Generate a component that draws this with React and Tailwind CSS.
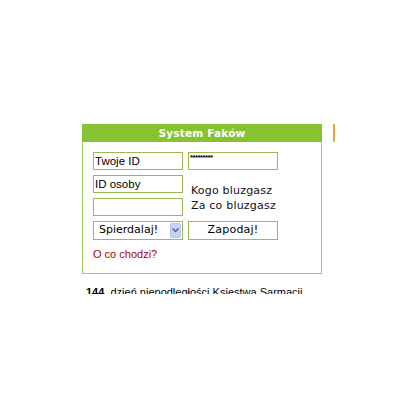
export default function App() {
  return (
    <div className="w-[400px] h-[400px] bg-white overflow-hidden pt-[124px] pl-[82px]">
      <div className="flex items-start">
        <div className="w-[240px]">
          <div
            className="h-[18px] bg-[#86c232] text-white font-bold text-[10.5px] leading-[18px] text-center tracking-[0.2px]"
            style={{ fontFamily: '"DejaVu Sans", Verdana, sans-serif' }}
          >
            System Faków
          </div>
          <div className="h-[132px] border border-t-0 border-[#9fcc5c] pt-[10px] pl-[10px]">
            <div className="grid grid-cols-[90px_90px] gap-x-[5px] grid-rows-[18px_18px_18px_19px] gap-y-[5px]">
              <div
                className="border border-[#99bb55] text-[11.5px] leading-[16px] pl-[1px] text-black"
                style={{ fontFamily: '"Liberation Sans", Arial, sans-serif' }}
              >
                Twoje ID
              </div>
              <div className="border border-[#99bb55] pl-[1px] text-[8px] leading-[10px] text-black font-bold tracking-[-0.6px]" style={{ fontFamily: '"Liberation Sans", Arial, sans-serif' }}>
                *********
              </div>
              <div
                className="border border-[#99bb55] text-[11.5px] leading-[16px] pl-[1px] text-black"
                style={{ fontFamily: '"Liberation Sans", Arial, sans-serif' }}
              >
                ID osoby
              </div>
              <div
                className="row-span-2 flex flex-col justify-center pl-[3px] pt-[4px] text-[11px] leading-[15px] text-[#111] tracking-[0.2px]"
                style={{ fontFamily: '"DejaVu Sans", Verdana, sans-serif' }}
              >
                <div>Kogo bluzgasz</div>
                <div>Za co bluzgasz</div>
              </div>
              <div className="border border-[#99bb55]"></div>
              <div
                className="border border-[#99bb55] flex items-center justify-between pl-[5px] pr-[1px] text-[11px] text-black"
                style={{ fontFamily: '"DejaVu Sans", Verdana, sans-serif' }}
              >
                <span>Spierdalaj!</span>
                <span className="w-[11px] h-[15px] rounded-[2px] bg-[#c3d3fd] border border-[#b2c4ef] flex items-center justify-center">
                  <svg width="7" height="5" viewBox="0 0 7 5">
                    <path d="M0.5 0.5 L3.5 3.5 L6.5 0.5" fill="none" stroke="#4d6185" strokeWidth="1.5" />
                  </svg>
                </span>
              </div>
              <div
                className="border border-[#99bb55] flex items-center justify-center text-[11px] text-black tracking-[0.2px]"
                style={{ fontFamily: '"DejaVu Sans", Verdana, sans-serif' }}
              >
                Zapodaj!
              </div>
            </div>
            <div
              className="mt-[8px] text-[11px] leading-[13px] text-[#aa0000]"
              style={{ fontFamily: '"Liberation Sans", Arial, sans-serif' }}
            >
              O co chodzi?
            </div>
          </div>
        </div>
        <div className="ml-[11px] w-[2px] h-[18px] flex flex-col">
          <div className="h-[15px] bg-[#f0a030]"></div>
          <div className="h-[3px] bg-[#a8cc66]"></div>
        </div>
      </div>
      <div
        className="mt-[12px] ml-[4px] h-[8px] overflow-hidden text-[11px] leading-[13px] text-black whitespace-nowrap"
        style={{ fontFamily: '"Liberation Sans", Arial, sans-serif' }}
      >
        <b>144.</b> dzień niepodległości Księstwa Sarmacji
      </div>
    </div>
  );
}
